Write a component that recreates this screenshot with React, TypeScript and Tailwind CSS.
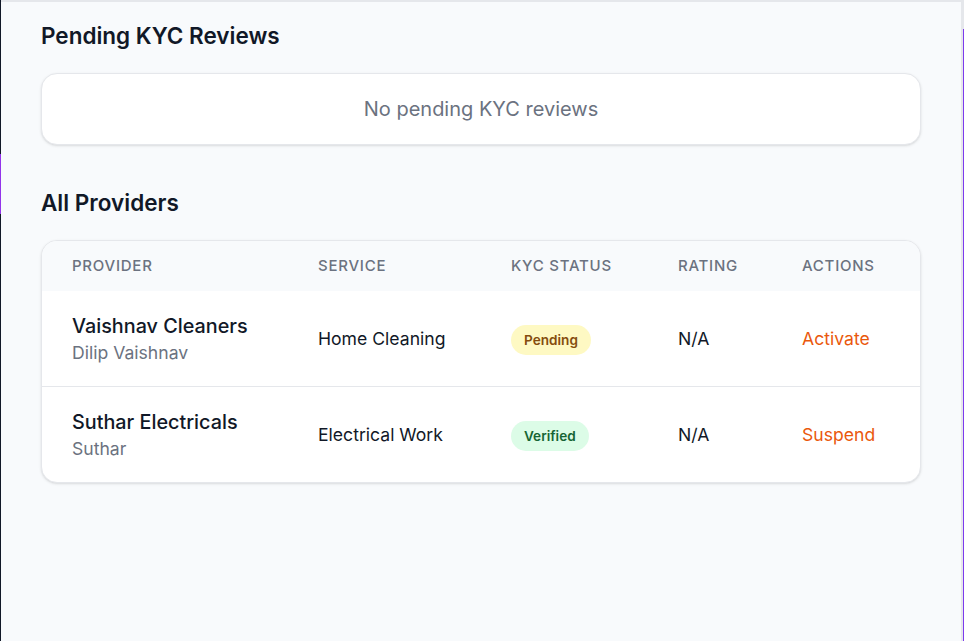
type Provider = {
  business: string;
  owner: string;
  service: string;
  kyc: "Pending" | "Verified";
  rating: string;
  action: string;
};

const providers: Provider[] = [
  { business: "Vaishnav Cleaners", owner: "Dilip Vaishnav", service: "Home Cleaning", kyc: "Pending", rating: "N/A", action: "Activate" },
  { business: "Suthar Electricals", owner: "Suthar", service: "Electrical Work", kyc: "Verified", rating: "N/A", action: "Suspend" },
];

function KycBadge({ status }: { status: Provider["kyc"] }) {
  return (
    <span
      className={
        status === "Pending"
          ? "inline-flex items-center rounded-full px-[13px] h-[30px] text-[13.6px] font-semibold bg-[#fef9c3] text-[#854d0e]"
          : "inline-flex items-center rounded-full px-[13px] h-[30px] text-[13.6px] font-semibold bg-[#dcfce7] text-[#166534]"
      }
    >
      {status}
    </span>
  );
}

export default function App() {
  return (
    <div className="min-h-screen flex bg-[#f8fafc] font-['Inter',_'Liberation_Sans',_sans-serif]">
      <div className="w-px flex flex-col shrink-0">
        <div className="h-[154px] bg-[#111827]" />
        <div className="h-[60px] bg-[#9333ea]" />
        <div className="flex-1 bg-[#111827]" />
      </div>

      <main className="flex-1 border-t-2 border-[#e5e7eb] px-10 pt-[20px]">
        <h2 className="text-[22.5px] leading-[28px] font-semibold text-[#111827] mb-[23px]">Pending KYC Reviews</h2>
        <div className="bg-white rounded-2xl border border-[#e5e7eb] shadow-sm h-[72px] flex items-center justify-center">
          <p className="text-[20px] text-[#6b7280]">No pending KYC reviews</p>
        </div>

        <h2 className="mt-[44px] text-[22.5px] leading-[28px] font-semibold text-[#111827] mb-[23px]">All Providers</h2>
        <div className="bg-white rounded-2xl border border-[#e5e7eb] shadow-sm overflow-hidden">
          <table className="w-full text-left">
            <thead className="bg-[#f8fafc]">
              <tr className="h-[50px] text-[15px] font-medium uppercase tracking-wider text-[#6b7280]">
                <th className="pl-[30px] w-[276px] font-medium">Provider</th>
                <th className="w-[193px] font-medium">Service</th>
                <th className="w-[167px] font-medium">KYC Status</th>
                <th className="w-[124px] font-medium">Rating</th>
                <th className="font-medium">Actions</th>
              </tr>
            </thead>
            <tbody>
              {providers.map((p, i) => (
                <tr key={p.business} className={i > 0 ? "h-[96px] border-t border-[#e5e7eb]" : "h-[95px]"}>
                  <td className="pl-[30px] pt-[2px]">
                    <div className="text-[19.8px] leading-[28px] font-medium text-[#111827]">{p.business}</div>
                    <div className="text-[17.6px] leading-[26px] text-[#6b7280]">{p.owner}</div>
                  </td>
                  <td className="pt-[2px] text-[17.6px] text-[#111827]">{p.service}</td>
                  <td className="pt-[3px]">
                    <KycBadge status={p.kyc} />
                  </td>
                  <td className="pt-[2px] text-[17.6px] text-[#111827]">{p.rating}</td>
                  <td className="pt-[2px] text-[17.6px] text-[#ea580c]">{p.action}</td>
                </tr>
              ))}
            </tbody>
          </table>
        </div>
      </main>

      <div className="w-[3px] shrink-0 bg-[#e5e7eb] flex">
        <div className="w-[2px]" />
        <div className="w-px mt-[29px] bg-[#7c3aed]" />
      </div>
    </div>
  );
}
